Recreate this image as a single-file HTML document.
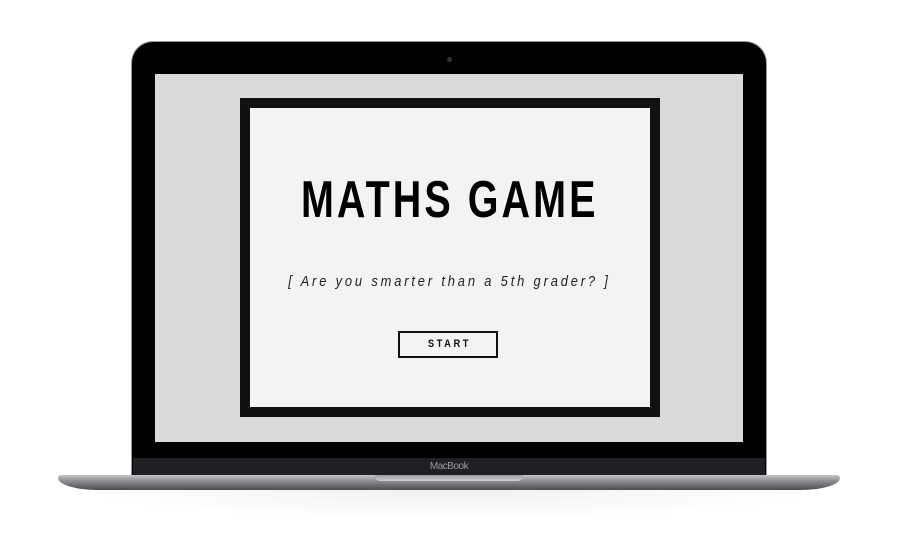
<!DOCTYPE html>
<html><head><style>
body{margin:0;width:899px;height:540px;background:#fff;position:relative;overflow:hidden;font-family:"Liberation Sans",sans-serif}
div{position:absolute;box-sizing:border-box}
.lid{left:131px;top:41px;width:636px;height:436px;background:#000;border-radius:22px 22px 0 0;border:1px solid #999;border-bottom:none}
.scr{left:155px;top:74px;width:588px;height:368px;background:#dadada}
.frame{left:240px;top:98px;width:420px;height:319px;background:#f3f3f3;border:10px solid #111}
.chin{left:133px;top:458px;width:632px;height:17px;background:#1f2023;color:#9a9a9a;font-size:10px;text-align:center;line-height:17px;letter-spacing:-0.5px}
.base{left:58px;top:475px;width:782px;height:15px;background:linear-gradient(#c5c6c8,#8d8e92 40%,#4a4b4f);border-radius:3px 3px 40px 40px/3px 3px 12px 12px}
.notch{left:375px;top:475px;width:148px;height:6px;background:linear-gradient(#9b9ca0,#cfd0d2);border-radius:0 0 5px 5px}
.shadow{left:80px;top:490px;width:740px;height:30px;background:radial-gradient(ellipse at top,rgba(0,0,0,0.06),rgba(0,0,0,0) 70%)}
.cam{left:447px;top:57px;width:5px;height:5px;border-radius:50%;background:#333}
.t{left:0;width:899px;text-align:center}
.t span{display:inline-block}
</style></head><body>
<div class="shadow"></div>
<div class="lid"></div>
<div class="cam"></div>
<div class="scr"></div>
<div class="frame"></div>
<div class="t" style="top:170px;font-weight:bold;font-size:52px;letter-spacing:4px;line-height:60px;color:#000"><span style="transform:scaleX(0.76)">MATHS GAME</span></div>
<div class="t" style="top:272px;font-style:italic;font-size:15px;letter-spacing:3.3px;color:#222;line-height:20px"><span style="transform:scaleX(0.86)">[ Are you smarter than a 5th grader? ]</span></div>
<div style="left:398px;top:331px;width:100px;height:27px;border:2px solid #111;text-align:center;font-size:11px;font-weight:bold;letter-spacing:3px;line-height:23px;color:#111;padding-left:3px"><span style="display:inline-block;transform:scaleX(0.85)">START</span></div>
<div class="chin">MacBook</div>
<div class="base"></div>
<div class="notch"></div>
</body></html>
